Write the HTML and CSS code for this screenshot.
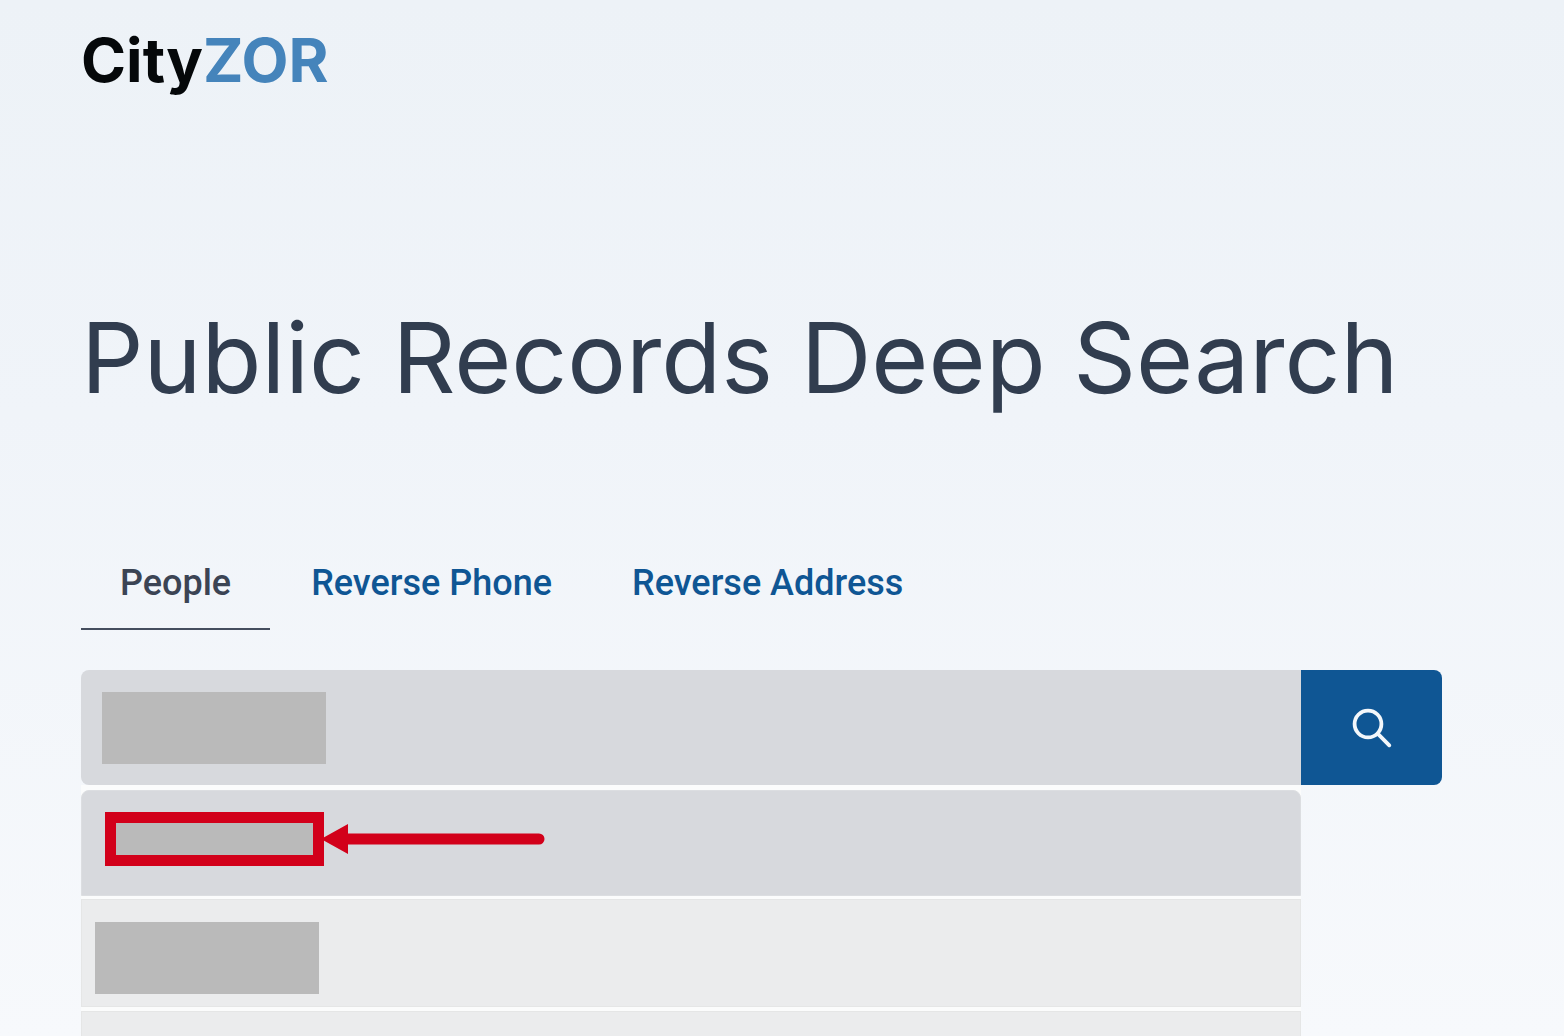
FILE: index.html
```html
<!doctype html>
<html lang="en">
<head>
	<meta charset="utf-8">
	<meta name="viewport" content="width=device-width, initial-scale=1.0">
	<title>CityZOR - Public Records Deep Search</title>
	<link rel="stylesheet" href="styles.css">
</head>
<body>

	<header>
		<a href="#" class="logo">City<span>ZOR</span></a>
	</header>

	<main>
		<h1>Public Records Deep Search</h1>

		<nav class="tabs">
			<a href="#people" class="current">People</a>
			<a href="#phone">Reverse Phone</a>
			<a href="#address">Reverse Address</a>
		</nav>

		<form class="search">
			<div class="field">
				<span class="redacted"></span>
				<input type="text" id="searchinput" aria-label="Search people" autocomplete="off" />
			</div>
			<button type="submit" aria-label="Search">
				<svg width="40" height="40" viewBox="0 0 40 40" fill="none" stroke="#f3f7fb" stroke-width="3.8" stroke-linecap="round"><circle cx="16" cy="16" r="13.4"/><path d="M25.7 25.7 37.3 37.3"/></svg>
			</button>
		</form>

		<ul class="suggestions">
			<li class="active">
				<span class="redacted marked"></span>
				<svg class="arrow" width="224" height="30" viewBox="0 0 224 30" fill="#d2001a"><path d="M0 15 27 0V9.500H218A5.500 5.500 0 0 1 218 20.500H27V30Z"/></svg>
			</li>
			<li><span class="redacted"></span></li>
			<li class="more"></li>
		</ul>
	</main>

</body>
</html>
```
FILE: styles.css
```css
* {margin:0; padding:0; box-sizing:border-box;}
body {display:flex; flex-direction:column; min-height:100vh; padding:24px 122px 0 81px; font-family:"Roboto","Arial",sans-serif; background:linear-gradient(#edf2f7, #f0f4f9 40%, #f7f9fc);}
a {text-decoration:none;}

.logo {display:block; font:700 61px/72px "Inter","Arial",sans-serif; color:#05080a;}
.logo span {color:#4584bb;}

main {display:flex; flex:1; flex-direction:column;}
h1 {margin-top:202px; font:400 98px/120px "Inter","Arial",sans-serif; color:#313d4f; white-space:nowrap;}

/* tabs */
.tabs {display:flex; gap:2px; margin-top:120px;}
.tabs a {padding:22px 39px; font-size:36px; font-weight:500; line-height:46px; color:#0f5694; border-bottom:2px solid transparent;}
.tabs .current {color:#3b4454; border-color:#454e5e;}

/* search box */
.search {display:flex; height:115px; margin-top:40px;}
.field {display:flex; flex:1; align-items:center; padding-left:21px; background:#d7d9dd; border-radius:8px 0 0 8px;}
.field input {flex:1; height:100%; padding:0 20px; font:400 36px "Roboto","Arial",sans-serif; background:none; border:0; outline:0;}
.search button {display:flex; align-items:center; justify-content:center; width:141px; background:#0f5694; border:0; border-radius:0 8px 8px 0;}

.redacted {display:block; width:224px; height:72px; background:#bababa;}

/* results under the box, as wide as the field */
.suggestions {display:flex; flex:1; flex-direction:column; margin-right:141px; padding-top:5px; list-style-type:none; background:#fbfcfc;}
.suggestions li {position:relative; height:108px; margin-bottom:4px; padding:22px 13px; background:#ebeced; border:1px solid #e5e6e6;}
.suggestions .active {height:106px; margin-bottom:3px; padding:21px 23px; background:#d7d9dd; border-color:#dcdee1; border-radius:8px 8px 0 0;}
.suggestions .more {flex:1; height:auto; margin-bottom:0; padding:0; border-bottom:0;}

/* highlight */
.marked {width:219px; height:54px; border:11px solid #d2001a;}
.arrow {position:absolute; left:239px; top:33px;}
```
